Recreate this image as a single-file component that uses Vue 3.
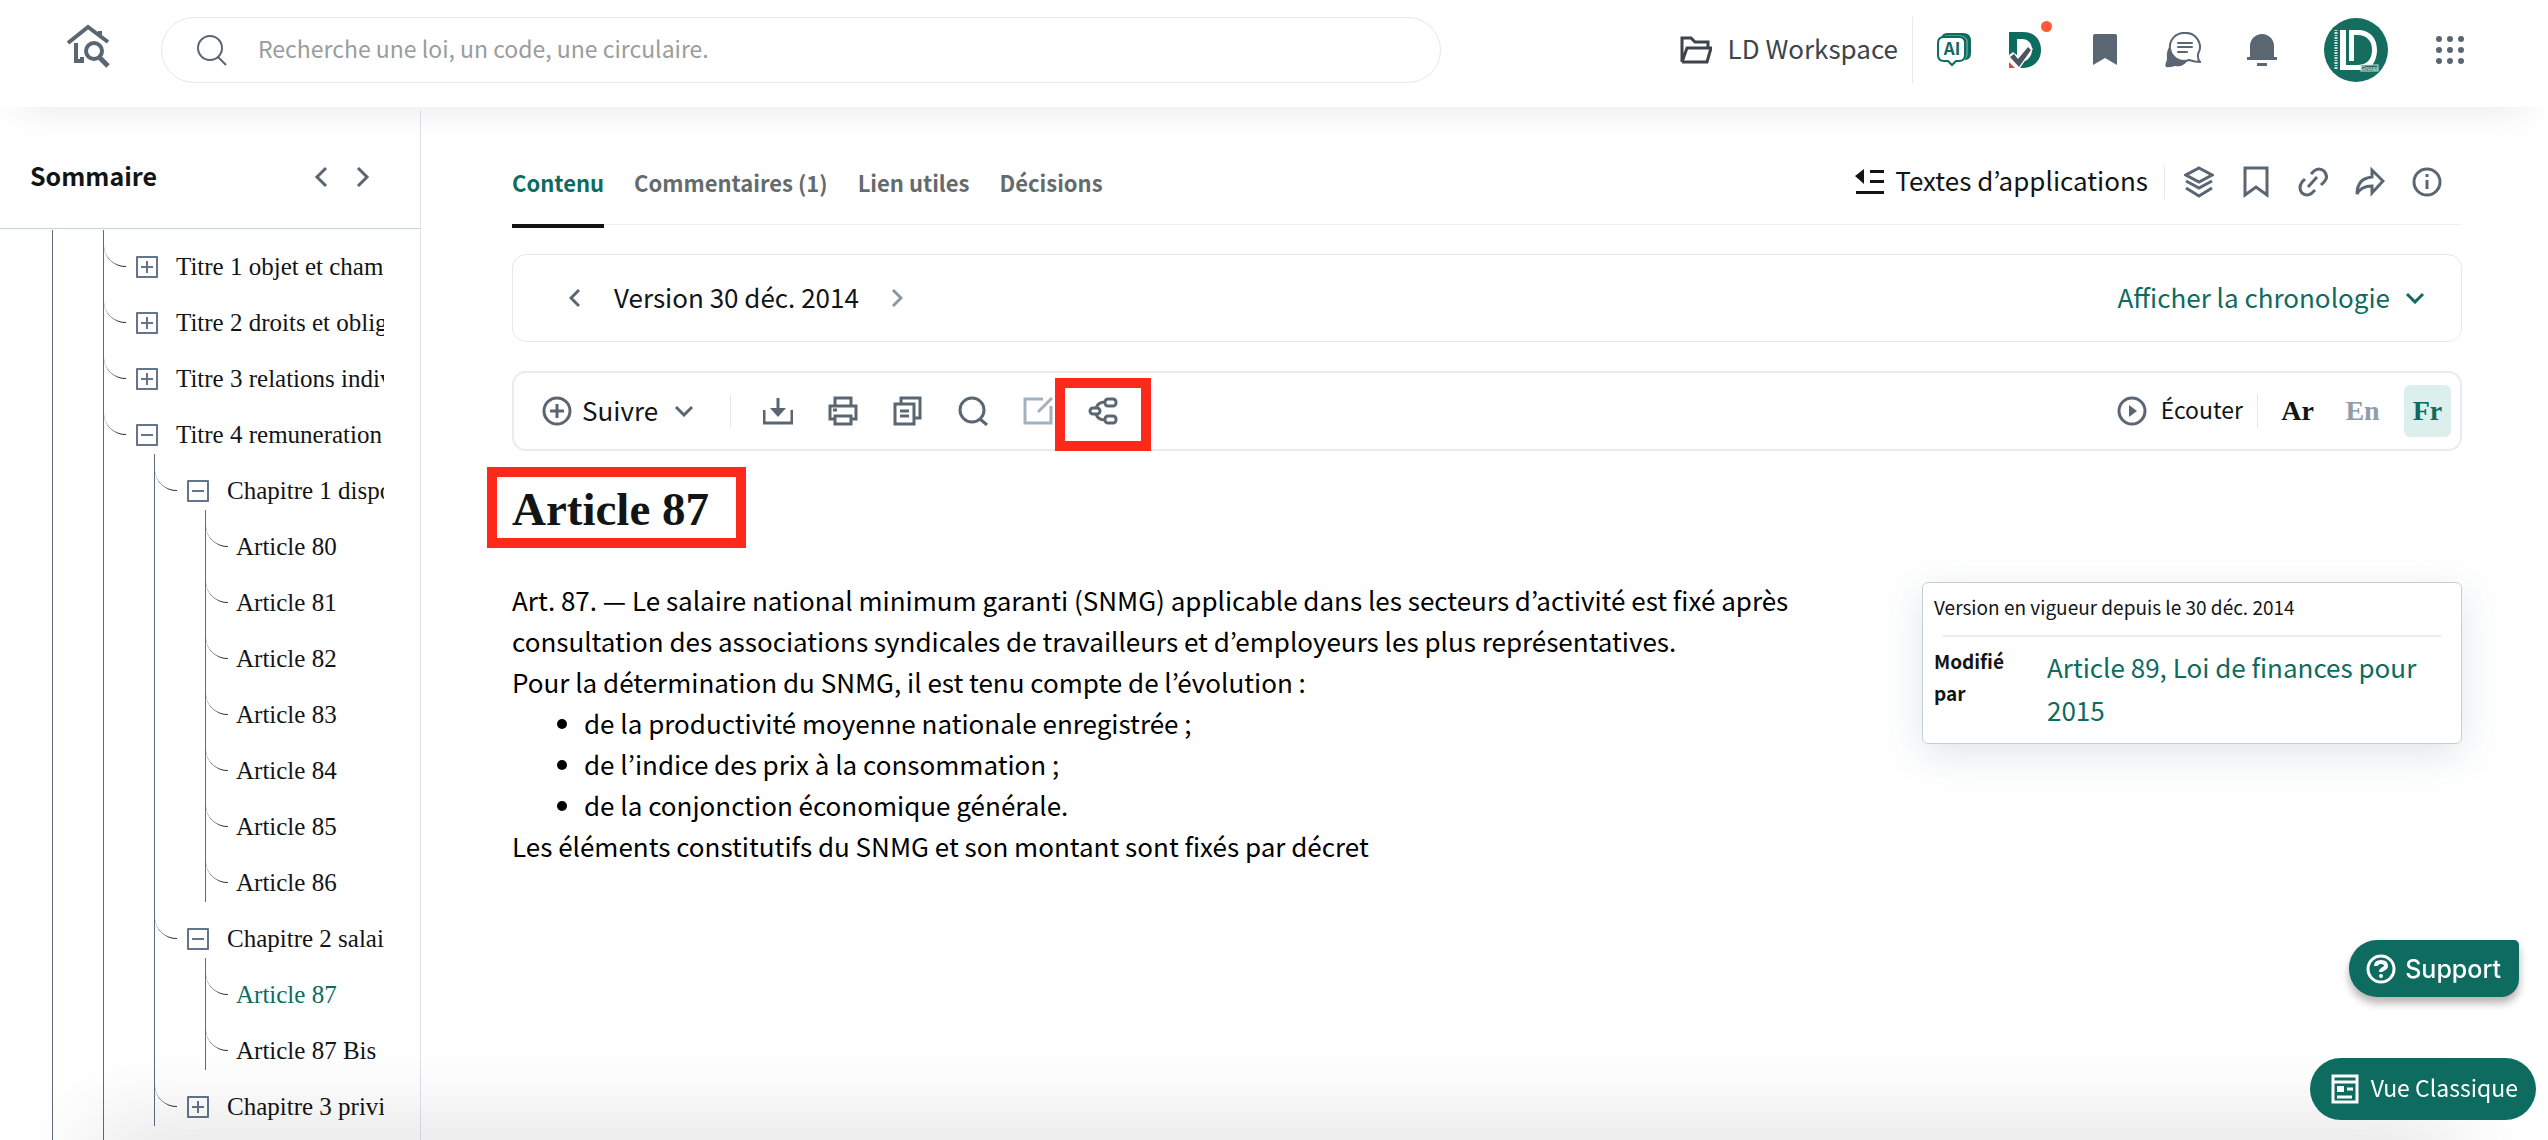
<template>
  <div class="app">
    <header class="topbar">
      <a href="#" class="home" aria-label="Accueil">
        <svg viewBox="0 0 44 46" aria-hidden="true">
          <path d="M10 20v18h6v-4M2 20 22 4l20 15M34 8v5" fill="none" stroke="currentColor" stroke-width="4" />
          <circle cx="28" cy="28" r="8" fill="none" stroke="currentColor" stroke-width="4" />
          <path d="m33 34 9 9" stroke="currentColor" stroke-width="5" />
        </svg>
      </a>
      <form class="search" role="search" @submit.prevent>
        <svg viewBox="0 0 32 32" class="search-icon" aria-hidden="true">
          <circle cx="14" cy="14" r="12" /><path d="m22 23 8 8" />
        </svg>
        <input v-model="query" type="search" aria-label="Recherche" placeholder="Recherche une loi, un code, une circulaire." />
      </form>

      <nav class="top-actions">
        <a href="#" class="workspace">
          <svg viewBox="0 0 32 30" aria-hidden="true">
            <path d="M2 27V3h9l4 4h13v5M2 27h25l4-14H7L2 27" />
          </svg>
          <span class="label">LD Workspace</span>
        </a>
        <button type="button" class="ai" aria-label="Assistant AI">
          <svg viewBox="0 0 34 36" aria-hidden="true">
            <path d="M4 6q1-5 7-5h15q8 0 8 8v12q0 7-6 7V12q0-6-6-6z" fill="#0d6b5f" />
            <path d="M30 8v14q0 3-2 5M8 4h16q4 0 6 4" fill="none" stroke="#8fbcb5" stroke-width="1" />
            <path d="M7 5h15q6 0 6 6v12q0 6-6 6h-3l-4 4-4-4H7q-6 0-6-6V11q0-6 6-6z" fill="#fff" stroke="#0d6b5f" stroke-width="2" />
            <text x="15" y="23" text-anchor="middle" class="ai-text">AI</text>
          </svg>
        </button>
        <button type="button" class="brand" aria-label="Veille juridique">
          <svg viewBox="0 0 32 36" aria-hidden="true">
            <path d="M0 0h14c12 0 18 8 18 18s-7 18-18 18H0z" fill="#0d6b5f" />
            <path d="M8 7h5c6 0 10 4 10 11 0 5-3 9-7 11H8z" fill="#fff" />
            <path d="m0 23 4-3 5 4 10-12 5 5-13 19H0z" fill="#fff" />
            <path d="M0 30v6h6z" fill="#e0444c" />
            <path d="m1 25 4-3 4 5 10-12 3 3-12 17z" fill="#4b5560" />
          </svg>
          <i class="dot"></i>
        </button>
        <button type="button" class="saved" aria-label="Favoris">
          <svg viewBox="0 0 24 31" aria-hidden="true"><path d="M2 0h20q2 0 2 2v29l-12-7-12 7V2q0-2 2-2z" fill="currentColor" /></svg>
        </button>
        <button type="button" class="chat" aria-label="Messages">
          <svg viewBox="0 0 36 36" aria-hidden="true">
            <path d="M5 14C1 19 2 24 2 27c0 3-3 5-1 8 4 1 7-1 9-1 5 1 10-1 12-5z" fill="currentColor" />
            <path d="M20 1a14 14 0 1 0 4 27c3 1 6 2 11 2-3-3-2-6-2-8A14 14 0 0 0 20 1z" fill="#fff" stroke="currentColor" stroke-width="2" />
            <path d="M13 11h14M13 15h14M13 20h9" stroke="currentColor" stroke-width="2" stroke-linecap="round" />
          </svg>
        </button>
        <button type="button" class="bell" aria-label="Notifications">
          <svg viewBox="0 0 30 32" aria-hidden="true"><path d="M3 23V12a12 12 0 0 1 24 0v11h3v3H0v-3zM10 29h10v3H10z" fill="currentColor" /></svg>
        </button>
        <button type="button" class="avatar" aria-label="Profil">
          <svg viewBox="0 0 64 64" aria-hidden="true">
            <circle cx="32" cy="32" r="32" fill="#156d60" />
            <path d="M16 12h6v35h11c10 0 15-6 15-15s-5-15-15-15h-3v26h-5V12h9c12 0 19 8 19 20 0 9-4 16-10 20H16z" fill="#fff" />
            <path d="M12 12v40" stroke="#cfe3df" stroke-width="3" stroke-dasharray="1 1 2 1" />
            <rect x="37" y="47" width="17" height="6" fill="#156d60" stroke="#cfe3df" />
            <text x="45" y="52" text-anchor="middle" class="group-text">Group</text>
          </svg>
        </button>
        <button type="button" class="apps" aria-label="Applications">
          <svg viewBox="0 0 28 28" fill="currentColor" aria-hidden="true">
            <template v-for="y in [3, 14, 25]" :key="y">
              <circle v-for="x in [3, 14, 25]" :key="x" :cx="x" :cy="y" r="3" />
            </template>
          </svg>
        </button>
      </nav>
    </header>

    <div class="layout">
      <aside class="sidebar">
        <div class="sidebar-head">
          <h2>Sommaire</h2>
          <button type="button" aria-label="Réduire"><svg viewBox="0 0 14 22" class="stroke"><path d="m12 2-9 9 9 9" /></svg></button>
          <button type="button" aria-label="Agrandir"><svg viewBox="0 0 14 22" class="stroke"><path d="m2 2 9 9-9 9" /></svg></button>
        </div>
        <nav class="tree" aria-label="Sommaire">
          <ul class="root">
            <li>
              <ul>
                <li v-for="titre in tree" :key="titre.label">
                  <div class="row">
                    <i class="branch"></i>
                    <button type="button" class="toggle" :class="{ open: titre.children }" :aria-label="titre.label"></button>
                    <a href="#">{{ titre.label }}</a>
                  </div>
                  <ul v-if="titre.children">
                    <li v-for="chapitre in titre.children" :key="chapitre.label">
                      <div class="row">
                        <i class="branch"></i>
                        <button type="button" class="toggle" :class="{ open: chapitre.articles }" :aria-label="chapitre.label"></button>
                        <a href="#">{{ chapitre.label }}</a>
                      </div>
                      <ul v-if="chapitre.articles">
                        <li v-for="article in chapitre.articles" :key="article">
                          <div class="row leaf">
                            <i class="branch"></i>
                            <a href="#" :class="{ current: article === current }">{{ article }}</a>
                          </div>
                        </li>
                      </ul>
                    </li>
                  </ul>
                </li>
              </ul>
            </li>
          </ul>
        </nav>
      </aside>

      <main class="content">
        <div class="tabs-bar">
          <div class="tabs" role="tablist">
            <button v-for="tab in tabs" :key="tab" type="button" role="tab" :aria-selected="tab === activeTab" :class="{ active: tab === activeTab }" @click="activeTab = tab">{{ tab }}</button>
          </div>
          <div class="doc-actions">
            <button type="button" class="textes">
              <svg viewBox="0 0 30 26" aria-hidden="true"><path d="M9 0v15L0 7zM15 1h14v3H15zM15 11h14v3H15zM1 22h28v3H1z" fill="currentColor" /></svg>
              <span class="label">Textes d’applications</span>
            </button>
            <span class="divider"></span>
            <button type="button" aria-label="Couches"><svg viewBox="0 0 30 32" class="stroke"><path d="m15 2 13 7-13 7L2 9zM2 15l13 7 13-7M2 22l13 8 13-8" /></svg></button>
            <button type="button" aria-label="Enregistrer"><svg viewBox="0 0 30 32" class="stroke"><path d="M4 2h22v27l-11-8-11 8z" /></svg></button>
            <button type="button" aria-label="Copier le lien"><svg viewBox="0 0 30 32" class="stroke"><path d="m10 21 9-10M13 8l3-3a7 7 0 0 1 10 0q5 6 0 11l-3 3M7 13l-3 3q-4 6 0 11 5 4 10 0l3-3" /></svg></button>
            <button type="button" aria-label="Partager"><svg viewBox="0 0 30 32" class="stroke"><path d="M17 4v7C7 12 2 18 2 28c3-6 8-8 15-8v7l11-12z" /></svg></button>
            <button type="button" aria-label="Informations"><svg viewBox="0 0 30 32" class="stroke"><circle cx="15" cy="16" r="13" /><path d="M15 14v9M15 8v3" /></svg></button>
          </div>
        </div>

        <section class="version">
          <button type="button" aria-label="Version précédente"><svg viewBox="0 0 12 20" class="stroke"><path d="m10 2-8 8 8 8" /></svg></button>
          <span class="version-label label">Version 30 déc. 2014</span>
          <button type="button" class="muted" aria-label="Version suivante"><svg viewBox="0 0 12 20" class="stroke"><path d="m2 2 8 8-8 8" /></svg></button>
          <button type="button" class="chronologie">
            <span class="label">Afficher la chronologie</span>
            <svg viewBox="0 0 20 12" class="stroke"><path d="m2 2 8 8 8-8" /></svg>
          </button>
        </section>

        <section class="toolbar">
          <button type="button" class="follow">
            <svg viewBox="0 0 30 30" class="stroke plus"><circle cx="15" cy="15" r="13" /><path d="M15 8v14M8 15h14" /></svg>
            <span class="label">Suivre</span>
            <svg viewBox="0 0 20 12" class="stroke caret"><path d="m2 2 8 8 8-8" /></svg>
          </button>
          <span class="divider"></span>
          <div class="tools">
            <button type="button" aria-label="Télécharger"><svg viewBox="0 0 30 30" class="stroke"><path d="M1 14v13h28V14M15 2v12" /><path d="M7 12h16l-8 9z" fill="currentColor" stroke="none" /></svg></button>
            <button type="button" aria-label="Imprimer"><svg viewBox="0 0 30 30" class="stroke"><path d="M7 9V2h16v7M7 23H2V10h26v13h-5M7 20h16v8H7zM5 14h4" /></svg></button>
            <button type="button" aria-label="Copier"><svg viewBox="0 0 30 30" class="stroke"><path d="M2 8h19v20H2zM8 8V2h19v20h-6M7 15h9M7 20h9" /></svg></button>
            <button type="button" aria-label="Rechercher"><svg viewBox="0 0 30 30" class="stroke"><circle cx="14" cy="14" r="12" /><path d="m22 23 7 6" /></svg></button>
            <button type="button" class="faded" aria-label="Annoter"><svg viewBox="0 0 30 30" class="stroke"><path d="M20 3H2v24h26V10M29 2 15 16" /></svg></button>
            <button type="button" class="marked" aria-label="Relations"><svg viewBox="0 0 30 30" class="stroke"><rect x="2" y="12" width="10" height="6" rx="3" /><rect x="17" y="3" width="11" height="7" rx="3" /><rect x="17" y="20" width="11" height="7" rx="3" /><path d="M8 12q2-6 9-6M8 18q2 6 9 6" /></svg></button>
          </div>
          <button type="button" class="listen">
            <svg viewBox="0 0 30 30" class="stroke"><circle cx="15" cy="15" r="13" /><path d="M12 9v12l8-6z" fill="currentColor" stroke="none" /></svg>
            <span class="label">Écouter</span>
          </button>
          <span class="divider"></span>
          <div class="langs">
            <button v-for="l in langs" :key="l" type="button" :class="[l.toLowerCase(), { selected: l === lang }]" @click="lang = l">{{ l }}</button>
          </div>
        </section>

        <div class="article">
          <article>
            <h1>Article 87</h1>
            <p>Art. 87. — Le salaire national minimum garanti (SNMG) applicable dans les secteurs d’activité est fixé après consultation des associations syndicales de travailleurs et d’employeurs les plus représentatives.</p>
            <p>Pour la détermination du SNMG, il est tenu compte de l’évolution :</p>
            <ul>
              <li>de la productivité moyenne nationale enregistrée ;</li>
              <li>de l’indice des prix à la consommation ;</li>
              <li>de la conjonction économique générale.</li>
            </ul>
            <p>Les éléments constitutifs du SNMG et son montant sont fixés par décret</p>
          </article>
          <aside class="info-card">
            <p>Version en vigueur depuis le 30 déc. 2014</p>
            <hr />
            <div class="info-row">
              <strong>Modifié par</strong>
              <a href="#">Article 89, Loi de finances pour 2015</a>
            </div>
          </aside>
        </div>
      </main>
    </div>

    <div class="bottom-shade"></div>
    <div class="floating">
      <button type="button" class="support">
        <svg viewBox="0 0 30 30" class="stroke" aria-hidden="true"><circle cx="15" cy="15" r="13" /><path d="M10 12q0-4 5-4t5 4q0 2-3 3-2 1-2 3" stroke-width="4" /><circle cx="15" cy="22" r="2" fill="currentColor" stroke="none" /></svg>
        <span>Support</span>
      </button>
      <button type="button" class="classic">
        <svg viewBox="0 0 28 30" class="stroke" aria-hidden="true"><path d="M2 2h24v26H2zM2 8h24M6 23h15M16 15h6" /><path d="M6 12h7v6H6z" fill="currentColor" stroke="none" /></svg>
        <span class="label">Vue Classique</span>
      </button>
    </div>
  </div>
</template>

<script setup>
import { ref } from 'vue';

const query = ref('');
const tabs = ['Contenu', 'Commentaires (1)', 'Lien utiles', 'Décisions'];
const activeTab = ref('Contenu');
const langs = ['Ar', 'En', 'Fr'];
const lang = ref('Fr');
const current = ref('Article 87');

const tree = [
  { label: 'Titre 1 objet et champ d’application' },
  { label: 'Titre 2 droits et obligations' },
  { label: 'Titre 3 relations individuelles' },
  {
    label: 'Titre 4 remuneration',
    children: [
      {
        label: 'Chapitre 1 dispositions',
        articles: ['Article 80', 'Article 81', 'Article 82', 'Article 83', 'Article 84', 'Article 85', 'Article 86'],
      },
      { label: 'Chapitre 2 salaire', articles: ['Article 87', 'Article 87 Bis'] },
      { label: 'Chapitre 3 privileges' },
    ],
  },
];
</script>

<style>
body {
  margin: 0;
  background: #fff;
}
</style>

<style scoped>
.app {
  --green: #0d6b5f;
  --slate: #5b6673;
  --ink: #121516;
  --line: #e6e8ea;
  height: 100vh;
  display: flex;
  flex-direction: column;
  overflow: hidden;
  font-family: "Noto Sans CJK KR", "Noto Sans", sans-serif;
  font-size: 26px;
  color: var(--ink);
}
* {
  box-sizing: border-box;
}
button {
  display: flex;
  align-items: center;
  padding: 0;
  border: 0;
  background: none;
  font: inherit;
  color: var(--slate);
  cursor: pointer;
}
a {
  color: inherit;
  text-decoration: none;
}
svg {
  display: block;
  flex: none;
}
.stroke {
  fill: none;
  stroke: currentColor;
  stroke-width: 3;
}
h1, h2, p, ul {
  margin: 0;
  padding: 0;
}
/* The font sits low in its line box, this centres it beside icons */
.label {
  padding-bottom: 4px;
}
.divider {
  width: 1px;
  height: 34px;
  background: var(--line);
}

/* Top bar */
.topbar {
  display: flex;
  align-items: center;
  flex: none;
  height: 107px;
  padding: 0 84px 8px 66px;
  background: #fff;
  box-shadow: 0 20px 40px -20px rgba(0, 0, 0, 0.1);
  z-index: 1;
}
.home {
  color: var(--slate);
  margin-right: 51px;
  padding-bottom: 8px;
}
.home svg {
  width: 44px;
  height: 46px;
}
.search {
  display: flex;
  align-items: center;
  flex: 0 1 1280px;
  height: 66px;
  padding: 0 34px;
  gap: 30px;
  border: 1px solid #e6e7e8;
  border-radius: 33px;
}
.search-icon {
  width: 32px;
  height: 32px;
  fill: none;
  stroke: var(--slate);
  stroke-width: 2;
}
.search input {
  flex: 1;
  border: 0;
  outline: 0;
  padding: 0 0 4px;
  font: inherit;
  font-size: 23px;
  background: none;
}
.search input::placeholder {
  color: #999d9c;
  opacity: 1;
}
.top-actions {
  display: flex;
  align-items: center;
  margin-left: auto;
}
.workspace {
  display: flex;
  align-items: center;
  gap: 16px;
  height: 66px;
  padding-right: 14px;
  border-right: 1px solid var(--line);
  color: #3c444c;
}
.workspace svg {
  width: 32px;
  height: 30px;
  fill: none;
  stroke: currentColor;
  stroke-width: 3;
}
.ai {
  margin: 0 38px 0 24px;
}
.ai svg {
  width: 34px;
  height: 36px;
}
.ai-text {
  font: bold 17px "Noto Sans CJK KR", sans-serif;
  fill: #0d6b5f;
}
.brand {
  position: relative;
}
.brand svg {
  width: 32px;
  height: 36px;
}
.dot {
  position: absolute;
  top: -11px;
  right: -11px;
  width: 11px;
  height: 11px;
  border-radius: 50%;
  background: #ff5a36;
}
.saved {
  margin: 0 48px 0 52px;
}
.saved svg {
  width: 24px;
  height: 31px;
}
.chat svg {
  width: 36px;
  height: 36px;
}
.bell {
  margin: 0 47px 0 46px;
}
.bell svg {
  width: 30px;
  height: 32px;
}
.avatar svg {
  width: 64px;
  height: 64px;
}
.group-text {
  font: 6px "Liberation Sans", sans-serif;
  fill: #fff;
}
.apps {
  margin-left: 48px;
}
.apps svg {
  width: 28px;
  height: 28px;
}

.layout {
  display: flex;
  flex: 1;
  min-height: 0;
  padding-top: 4px;
}

/* Sidebar tree */
.sidebar {
  display: flex;
  flex-direction: column;
  flex: none;
  width: 421px;
  border-right: 1px solid #dfe3e8;
}
.sidebar-head {
  display: flex;
  align-items: center;
  flex: none;
  height: 118px;
  padding: 14px 50px 0 30px;
  gap: 28px;
  border-bottom: 1px solid #c3d4da;
}
.sidebar-head h2 {
  flex: 1;
  padding-bottom: 4px;
  font-size: 25px;
  font-weight: 700;
}
.sidebar-head svg {
  width: 14px;
  height: 22px;
}
.tree {
  display: flex;
  flex: 1;
  min-height: 0;
  margin: 1px 36px 0 0;
  overflow: hidden;
  font-family: "Liberation Serif", serif;
  font-size: 25px;
}
.tree ul {
  margin-left: 50px;
  border-left: 1px solid #5d6c7f;
  list-style: none;
}
.tree .root {
  flex: 1;
  min-width: 0;
  margin-left: 52px;
  display: grid;
}
.root > li {
  display: grid;
  min-width: 0;
}
.root > li > ul {
  min-width: 0;
}
.row {
  display: flex;
  align-items: center;
  height: 56px;
  padding-top: 18px;
}
.row a {
  margin-left: 18px;
  white-space: nowrap;
}
.row.leaf a {
  margin-left: 8px;
}
.row a.current {
  color: var(--green);
}
.branch {
  flex: none;
  width: 22px;
  height: 21px;
  margin-bottom: 22px;
  border-bottom: 1px solid #333;
  border-bottom-left-radius: 22px 21px;
}
.toggle {
  flex: none;
  width: 22px;
  height: 22px;
  margin-left: 10px;
  border: 2px solid #64748b;
  border-radius: 1px;
  background:
    linear-gradient(#64748b, #64748b) center / 12px 2px no-repeat,
    linear-gradient(#64748b, #64748b) center / 2px 12px no-repeat;
}
.toggle.open {
  background: linear-gradient(#64748b, #64748b) center / 12px 2px no-repeat;
}

/* Document */
.content {
  flex: 1;
  min-width: 0;
  padding: 32px 86px 0 91px;
}
.tabs-bar {
  display: flex;
  justify-content: space-between;
  height: 82px;
  border-bottom: 1px solid #eceeef;
}
.tabs {
  display: flex;
  gap: 30px;
}
.tabs button {
  height: 85px;
  padding-bottom: 4px;
  border-bottom: 4px solid transparent;
  font-size: 22px;
  font-weight: 700;
  color: #646b6c;
}
.tabs button.active {
  color: var(--green);
  border-color: #101314;
}
.doc-actions {
  display: flex;
  align-items: center;
  gap: 27px;
  padding: 0 20px 4px 0;
}
.doc-actions svg {
  width: 30px;
  height: 32px;
}
.doc-actions .divider {
  margin: 0 -8px 0 -11px;
}
.doc-actions .textes {
  gap: 10px;
  color: var(--ink);
}
.doc-actions .textes svg {
  height: 26px;
}
.version {
  display: flex;
  align-items: center;
  height: 88px;
  margin-top: 29px;
  padding: 0 36px 0 56px;
  border: 1px solid var(--line);
  border-radius: 14px;
}
.version svg {
  width: 12px;
  height: 20px;
}
.version-label {
  margin: 0 32px 0 33px;
}
.version .muted {
  color: #8a97a5;
}
.version .chronologie {
  margin-left: auto;
  gap: 15px;
  color: var(--green);
}
.version .chronologie svg {
  width: 20px;
  height: 12px;
}
.toolbar {
  display: flex;
  align-items: center;
  height: 80px;
  margin-top: 29px;
  padding: 0 9px 0 28px;
  border: 2px solid #e9ebec;
  border-radius: 14px;
}
.toolbar svg {
  width: 30px;
  height: 30px;
}
.toolbar .caret {
  width: 20px;
  height: 12px;
}
.follow {
  margin-right: 36px;
}
.follow span {
  margin: 0 16px 0 10px;
  color: var(--ink);
}
.tools {
  display: flex;
  gap: 35px;
  margin-left: 32px;
}
.faded {
  color: #a3b1bf;
}
/* Red callout frames */
.marked {
  position: relative;
}
.marked::after {
  content: "";
  position: absolute;
  inset: -18px -33px -25px;
  border: 10px solid #fd2a1c;
}
.listen {
  margin: 0 14px 0 auto;
  gap: 14px;
}
.listen span {
  font-size: 23px;
  color: var(--ink);
}
.langs {
  display: flex;
  gap: 18px;
  margin-left: 16px;
}
.langs button {
  justify-content: center;
  width: 47px;
  height: 52px;
  border-radius: 6px;
  font: bold 28px "Liberation Serif", serif;
}
.langs .ar {
  color: var(--ink);
}
.langs .en {
  color: #8f9caa;
}
.langs .selected {
  background: #dcefed;
  color: var(--green);
}

.article {
  display: flex;
  align-items: flex-start;
  justify-content: space-between;
}
article {
  width: 66%;
  font-size: 26px;
  line-height: 41px;
  color: #000;
}
article h1 {
  position: relative;
  width: max-content;
  margin: 32px 0 44px;
  font: bold 47px/52px "Liberation Serif", serif;
  color: var(--ink);
}
article h1::after {
  content: "";
  position: absolute;
  inset: -16px -37px -13px -25px;
  border: 10px solid #fd2a1c;
}
article ul {
  padding-left: 72px;
}
.info-card {
  width: 540px;
  margin-top: 131px;
  padding: 8px 11px 12px;
  border: 1px solid #c4cfd6;
  border-radius: 6px;
  box-shadow: 0 10px 40px rgba(60, 95, 110, 0.16);
  font-size: 19px;
  line-height: 32px;
}
.info-card hr {
  margin: 12px 9px 8px;
  border: 0;
  border-top: 2px solid #eceded;
}
.info-row {
  display: flex;
  gap: 23px;
}
.info-row strong {
  flex: none;
  width: 90px;
  font-weight: 700;
}
.info-row a {
  font-size: 26px;
  line-height: 43px;
  color: var(--green);
}

.bottom-shade {
  position: fixed;
  left: 100px;
  right: 100px;
  top: 100%;
  height: 40px;
  box-shadow: 0 0 90px 5px rgba(0, 0, 0, 0.18);
  pointer-events: none;
}
.floating {
  position: fixed;
  right: 12px;
  bottom: 20px;
  display: flex;
  flex-direction: column;
  align-items: flex-end;
  gap: 61px;
}
.floating button {
  color: #fff;
  background: var(--green);
}
.floating .support {
  height: 57px;
  margin-right: 17px;
  padding: 0 18px 0 17px;
  gap: 9px;
  border-radius: 28px 5px 18px 28px;
  box-shadow: 0 6px 8px rgba(0, 0, 0, 0.3);
  font: 500 25px Inter, sans-serif;
}
.support svg {
  width: 30px;
  height: 30px;
}
.floating .classic {
  height: 62px;
  padding: 0 18px 0 21px;
  gap: 12px;
  border-radius: 31px;
  font-size: 23px;
}
.classic svg {
  width: 28px;
  height: 30px;
}
</style>
